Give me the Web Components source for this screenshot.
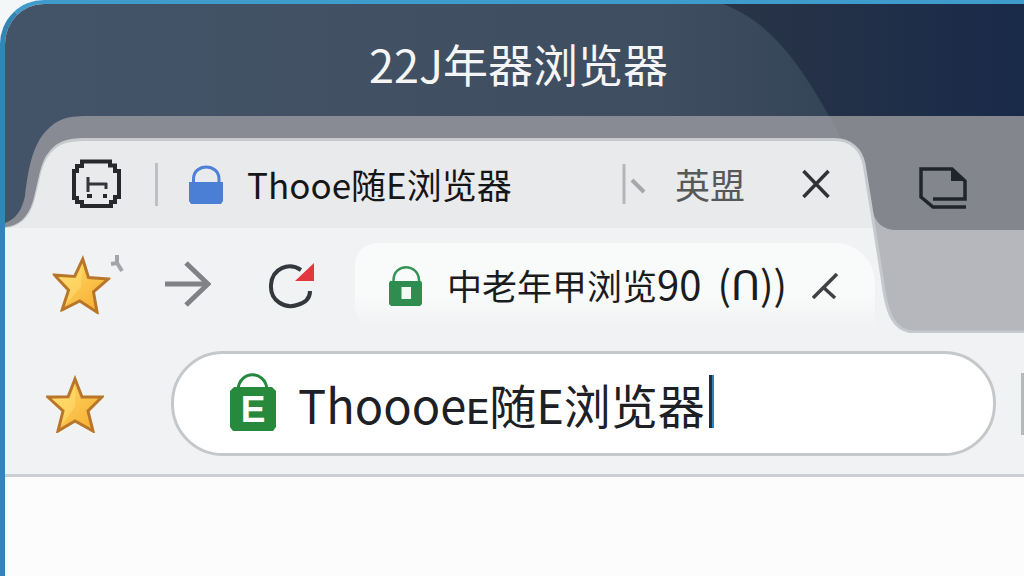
<!DOCTYPE html>
<html lang="zh-CN">
<head>
<meta charset="utf-8">
<title>浏览器</title>
<style>
  body {
    margin: 0;
    background: #f4f7f7;
    font-family: "Noto Sans CJK SC", sans-serif;
  }
</style>
</head>
<body>
<browser-window>
  <title-bar slot="title">22J年器浏览器</title-bar>
  <tab-strip slot="tabs" label="Thooe随E浏览器" extra="英盟"></tab-strip>
  <nav-bar slot="nav" label="中老年甲浏览" count="90" status="(ᑎ))"></nav-bar>
  <address-bar slot="address" value="Thoooeᴇ随E浏览器"></address-bar>
</browser-window>

<script>
const ICONS = {
  page: `<svg width="50" height="50" viewBox="0 0 50 50" fill="none" stroke="#26282c" stroke-width="4">
    <path d="M10 2.500H38V6.500H43V12H47V38H43V43H39V47H10V43H5V39H2V12H5V7H10Z"/>
    <path d="M16 18V33M16 25H35M34 24V30" stroke="#33353a" stroke-width="3"/>
    <path d="M15 37H20M31 37H35" stroke-width="4"/></svg>`,
  blueLock: `<svg width="34" height="39" viewBox="0 0 34 39">
    <path d="M4.500 18V14C4.500 -2 30 -2 30 14V18" fill="none" stroke="#4f82d6" stroke-width="3"/>
    <path d="M0 17H34V36L32 39H2L0 36Z" fill="#4a7fd5"/></svg>`,
  greenLock: `<svg width="34" height="40" viewBox="0 0 34 40">
    <path d="M4.500 18V14C5 -3 29 -3 30 14V18" fill="none" stroke="#379458" stroke-width="2.500"/>
    <path d="M1 15H32L33 17V38L31 40H2L0 38V17Z" fill="#2f8d50"/>
    <path d="M12.500 21H22V33H12.500Z" fill="#f4fbf5"/></svg>`,
  bag: `<svg width="46" height="58" viewBox="0 0 46 58">
    <path d="M8 16C10 -3 35 -3 37 16" fill="none" stroke="#23893f" stroke-width="3"/>
    <path d="M4 14H42L46 18V54L43 58H3L0 54V18Z" fill="#27893c"/>
    <text x="23" y="49" text-anchor="middle" font-family="Liberation Sans, sans-serif" font-weight="700" font-size="37" fill="#fff">E</text></svg>`,
  divider: `<svg width="26" height="42" viewBox="0 0 26 42" fill="none">
    <path d="M2 1V41" stroke="#b4b6ba" stroke-width="3"/>
    <path d="M10 17L22 29" stroke="#a5a7ab" stroke-width="4"/></svg>`,
  close: `<svg width="28" height="30" viewBox="0 0 28 30" fill="none" stroke="#303238" stroke-width="3.500">
    <path d="M1.500 2L26.500 28M26.500 2L1.500 28"/></svg>`,
  halfClose: `<svg width="28" height="28" viewBox="0 0 28 28" fill="none" stroke="#3f4145" stroke-width="3.500">
    <path d="M26 2L2 26M12 15L24 26"/></svg>`,
  newTab: `<svg width="50" height="44" viewBox="0 0 50 44" fill="none" stroke="#20242c" stroke-width="3.500">
    <path d="M15 33H47V15L34 3H3V31L15 41H48"/>
    <path d="M33 3V15H46Z" fill="#20242c" stroke="none"/></svg>`,
  star: `<svg width="58" height="58" viewBox="0 0 58 58">
    <defs><linearGradient id="g" x1="0" y1="0" x2="1" y2="1">
      <stop offset="0" stop-color="#ffe070"/><stop offset="1" stop-color="#f7a92b"/></linearGradient></defs>
    <path d="M29 4L36 22L56 22L42 36L47 56L29 46L12 56L17 36L2 22L22 22Z" fill="url(#g)" stroke="#b8762a" stroke-width="3"/>
    <path d="M29 9V32L15 51L19 35L6 24L24 23Z" fill="#ffdf74" opacity=".5"/></svg>`,
  forward: `<svg width="46" height="46" viewBox="0 0 46 46" fill="none" stroke="#808286">
    <path d="M0 23H42" stroke-width="5"/><path d="M21 2L43 23L21 44" stroke-width="5"/></svg>`,
  reload: `<svg width="48" height="46" viewBox="0 0 48 46" fill="none">
    <path d="M33 7C21 -1 4 5 3 22C2 38 17 46 29 42C37 40 42 35 42 28" stroke="#34383e" stroke-width="4"/>
    <path d="M46 0V18H27Z" fill="#e3373f"/></svg>`,
  spark: `<svg width="14" height="18" viewBox="0 0 14 18" fill="none" stroke="#a3a5a8" stroke-width="4">
    <path d="M7 0V8L1 9M7 8L12 16"/></svg>`
};

class BaseElement extends HTMLElement {
  constructor() {
    super();
    this.attachShadow({ mode: "open" });
  }

  connectedCallback() {
    const template = document.createElement("template");
    template.innerHTML = this.render();
    this.shadowRoot.appendChild(template.content.cloneNode(true));
  }
}

// Frame of the window: title on top, toolbars over the tab shape, page below
class BrowserWindow extends BaseElement {
  render() {
    return `
      <style>
        :host {
          display: flex;
          flex-direction: column;
          min-height: 100vh;
          box-sizing: border-box;
          border-top: 4px solid #3f9bcb;
          border-left: 5px solid #3485b5;
          border-top-left-radius: 44px;
          overflow: hidden;
          background: #fcfcfc;
        }
        .chrome { position: relative; background: #f1f2f3; border-bottom: 3px solid #cbcfd3; }
        .rows { position: relative; }
        main { flex: 1; background: #fcfcfc; }
      </style>
      <slot name="title"></slot>
      <div class="chrome">
        <chrome-backdrop></chrome-backdrop>
        <div class="rows">
          <slot name="tabs"></slot>
          <slot name="nav"></slot>
          <slot name="address"></slot>
        </div>
      </div>
      <main></main>`;
  }
}

class TitleBar extends BaseElement {
  render() {
    return `
      <style>
        :host {
          display: block;
          position: relative;
          color: #f5f5f5;
          background: linear-gradient(90deg, #445468, #3f4d60 65%, #344457 82%);
        }
        svg { position: absolute; right: 0; top: 0; height: 100%; }
        h1 {
          position: relative;
          margin: 0;
          padding: 30px 0 22px 8px;
          text-align: center;
          font-size: 45px;
          font-weight: 400;
          line-height: 60px;
        }
      </style>
      <svg width="304" height="112" viewBox="0 0 304 112" preserveAspectRatio="none">
        <defs><linearGradient id="n"><stop offset="0" stop-color="#293447"/><stop offset="1" stop-color="#192a49"/></linearGradient></defs>
        <path d="M3 0C48 17 77 55 109 112H304V0Z" fill="url(#n)"/>
      </svg>
      <h1><slot></slot></h1>`;
  }
}

// Outline of the active tab, drawn behind the rows
class ChromeBackdrop extends BaseElement {
  render() {
    return `
      <style>
        :host { display: flex; position: absolute; inset: 0 0 auto 0; height: 217px; }
        div {
          flex: 1;
          background: linear-gradient(#888b93 0 22px, #c9cace 22px 25px, #e9eaec 25px 112px, #f1f2f3 112px);
        }
      </style>
      <svg width="80" height="217" viewBox="0 0 80 217">
        <path d="M0 0H80V217H0Z" fill="#445468"/>
        <path d="M0 107C11 103 17 94 20 80C23 55 27 30 41 15C52 3 63 0 80 0V40L10 112H0Z" fill="#888b93"/>
        <path d="M0 111C14 110 23 101 28 85C34 63 35 46 44 36C52 26 61 22 80 22V113H0Z" fill="#c9cace"/>
        <path d="M0 112C14 111 24 102 29 86C35 64 36 48 45 38C53 28 62 25 80 25V113H0Z" fill="#e9eaec"/>
        <path d="M0 112H80V217H0Z" fill="#f1f2f3"/>
      </svg>
      <div></div>
      <svg width="194" height="217" viewBox="0 0 194 217">
        <defs><linearGradient id="t" gradientUnits="userSpaceOnUse" x1="0" y1="0" x2="0" y2="217">
          <stop offset=".516" stop-color="#e9eaec"/><stop offset=".516" stop-color="#f1f2f3"/></linearGradient></defs>
        <path d="M0 0H194V217H0Z" fill="#b5b7bc"/>
        <path d="M0 0H194V114H66C54 114 44 107 42 92H0Z" fill="#84868e"/>
        <path d="M0 0C4 8 8 16 12 26H0Z" fill="#888b93"/>
        <path d="M-3 23.500H5C20 23.500 31 33 34 48L44 110L53 168C57 200 65 216 85 216H197V220H-3Z" fill="url(#t)" stroke="#c6cace" stroke-width="3"/>
      </svg>`;
  }
}

class TabStrip extends BaseElement {
  render() {
    return `
      <style>
        :host { display: flex; align-items: center; height: 88px; padding: 24px 56px 0 67px; }
        svg { display: block; }
        button { border: 0; padding: 0; background: none; font: inherit; color: inherit; }
        .bar { width: 3px; height: 43px; margin: 0 31px 0 33px; background: #bdbfc3; }
        .tab { flex: 1; display: flex; align-items: center; gap: 24px; font-size: 35px; line-height: 48px; color: #151618; }
        .extra { margin: 0 57px 0 27px; font-size: 35px; line-height: 48px; color: #56585c; }
        .new { margin: 8px 0 0 88px; }
      </style>
      <button aria-label="页面">${ICONS.page}</button>
      <span class="bar"></span>
      <button class="tab">${ICONS.blueLock}<span>${this.getAttribute("label")}</span></button>
      ${ICONS.divider}
      <button class="extra">${this.getAttribute("extra")}</button>
      <button aria-label="关闭">${ICONS.close}</button>
      <button class="new" aria-label="新标签页">${ICONS.newTab}</button>`;
  }
}

class NavBar extends BaseElement {
  render() {
    return `
      <style>
        :host { display: flex; align-items: center; padding: 15px 149px 0 47px; }
        svg { display: block; }
        button { border: 0; padding: 0; background: none; font: inherit; color: inherit; }
        .star { display: flex; align-items: flex-start; padding-bottom: 4px; }
        .star svg:first-child { transform: rotate(4deg); }
        .forward { margin-left: 41px; padding-bottom: 4px; }
        .reload { margin: 0 39px 0 57px; }
        .pill {
          flex: 1;
          display: flex;
          align-items: center;
          height: 85px;
          padding: 0 36px 0 34px;
          box-sizing: border-box;
          border-radius: 22px 40px 0 22px;
          background: linear-gradient(#f9fafa 60%, #f1f2f3);
        }
        .text {
          flex: 1;
          display: flex;
          align-items: baseline;
          margin-left: 24px;
          padding-bottom: 4px;
          font-size: 35px;
          line-height: 48px;
          color: #1b1c1e;
        }
        .count, .status { font-size: 40px; }
        .status { margin-left: 16px; }
      </style>
      <button class="star" aria-label="收藏">${ICONS.star}${ICONS.spark}</button>
      <button class="forward" aria-label="前进">${ICONS.forward}</button>
      <button class="reload" aria-label="刷新">${ICONS.reload}</button>
      <div class="pill">
        ${ICONS.greenLock}
        <button class="text">
          <span>${this.getAttribute("label")}</span>
          <span class="count">${this.getAttribute("count")}</span>
          <span class="status">${this.getAttribute("status")}</span>
        </button>
        <button aria-label="关闭">${ICONS.halfClose}</button>
      </div>`;
  }
}

class AddressBar extends BaseElement {
  render() {
    return `
      <style>
        :host { display: flex; align-items: center; padding: 23px 0 18px 41px; }
        svg { display: block; }
        button { border: 0; padding: 0; background: none; }
        label {
          flex: 1;
          display: flex;
          align-items: center;
          height: 105px;
          box-sizing: border-box;
          margin: 0 25px 0 67px;
          padding: 0 56px 4px;
          border: 3px solid #c5c8cb;
          border-radius: 52px;
          background: #fff;
        }
        input {
          field-sizing: content;
          margin: 4px 4px 0 22px;
          padding: 0;
          border: 0;
          outline: 0;
          background: none;
          font: inherit;
          font-size: 47px;
          line-height: 64px;
          color: #1d2025;
        }
        .caret { width: 3px; height: 53px; background: #2a2d33; border-right: 2px solid #2b83c4; }
        .edge { width: 3px; height: 62px; background: #b5b8bd; }
      </style>
      <button aria-label="收藏">${ICONS.star}</button>
      <label>
        ${ICONS.bag}
        <input type="text" aria-label="地址" value="${this.getAttribute("value")}">
        <span class="caret"></span>
      </label>
      <span class="edge"></span>`;
  }
}

customElements.define("chrome-backdrop", ChromeBackdrop);
customElements.define("title-bar", TitleBar);
customElements.define("tab-strip", TabStrip);
customElements.define("nav-bar", NavBar);
customElements.define("address-bar", AddressBar);
customElements.define("browser-window", BrowserWindow);
</script>
</body>
</html>
